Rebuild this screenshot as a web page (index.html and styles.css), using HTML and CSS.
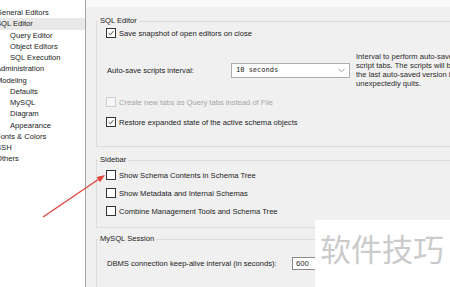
FILE: index.html
```html
<!DOCTYPE html>
<html lang="en">
<head>
	<meta charset="UTF-8">
	<title>Preferences</title>
	<link rel="stylesheet" href="styles.css">
</head>
<body>
<div class="sidebar">
	<div class="item">General Editors</div>
	<div class="item active">SQL Editor</div>
	<div class="item sub">Query Editor</div>
	<div class="item sub">Object Editors</div>
	<div class="item sub">SQL Execution</div>
	<div class="item">Administration</div>
	<div class="item">Modeling</div>
	<div class="item sub">Defaults</div>
	<div class="item sub">MySQL</div>
	<div class="item sub">Diagram</div>
	<div class="item sub">Appearance</div>
	<div class="item">Fonts &amp; Colors</div>
	<div class="item">SSH</div>
	<div class="item">Others</div>
</div>
<div class="main">
	<div class="topStrip"></div>
	<div class="panel">
		<fieldset class="group g1">
			<legend>SQL Editor</legend>
			<div class="row r1">
				<span class="chk"><svg viewBox="0 0 10 10"><path d="M2 5.2 L4.2 7.3 L8 2.6" /></svg></span>
				Save snapshot of open editors on close
			</div>
			<div class="interval">
				<span class="label">Auto-save scripts interval:</span>
				<span class="select">10 seconds<svg viewBox="0 0 8 5"><path d="M0.5 0.8 L4 4 L7.5 0.8" /></svg></span>
				<span class="desc">Interval to perform auto-save of all open<br>script tabs. The scripts will be restored from<br>the last auto-saved version if Workbench<br>unexpectedly quits.</span>
			</div>
			<div class="row r3 disabled">
				<span class="chk"></span>
				Create new tabs as Query tabs instead of File
			</div>
			<div class="row r4">
				<span class="chk"><svg viewBox="0 0 10 10"><path d="M2 5.2 L4.2 7.3 L8 2.6" /></svg></span>
				Restore expanded state of the active schema objects
			</div>
		</fieldset>

		<fieldset class="group g2">
			<legend>Sidebar</legend>
			<div class="row s1"><span class="chk"></span>Show Schema Contents in Schema Tree</div>
			<div class="row s2"><span class="chk"></span>Show Metadata and Internal Schemas</div>
			<div class="row s2"><span class="chk"></span>Combine Management Tools and Schema Tree</div>
		</fieldset>

		<fieldset class="group g3">
			<legend>MySQL Session</legend>
			<div class="keepAlive">
				<span class="label">DBMS connection keep-alive interval (in seconds):</span>
				<span class="input">600</span>
			</div>
		</fieldset>
	</div>
</div>

<!-- annotation arrow and watermark lie over the dialog -->
<svg class="arrow" viewBox="0 0 450 287">
	<line x1="43" y1="217" x2="99" y2="179" />
	<polygon points="105,175 100.1,182.2 96.6,177" />
</svg>
<div class="wm">软件技巧</div>
</body>
</html>
```

FILE: styles.css
```css
html, body {
	margin: 0;
	padding: 0;
}

body {
	width: 450px;
	height: 287px;
	overflow: hidden;
	display: flex;
	position: relative;
	font-family: "Liberation Sans", Arial, sans-serif;
	font-size: 7.6px;
	color: #1b1b1b;
	background: #fff;
}

.sidebar {
	width: 85px;
	flex: none;
	background: #fff;
	border-right: 1px solid #a6a6a6;
	padding-top: 7px;
	box-sizing: content-box;
	overflow: hidden;
}

.sidebar .item {
	height: 11.25px;
	line-height: 11.25px;
	text-indent: -4px;
	white-space: nowrap;
}

.sidebar .sub {
	text-indent: 10px;
}

.sidebar .active {
	background: #e8e8e8;
}

.main {
	flex: 1;
	display: flex;
	flex-direction: column;
	overflow: hidden;
}

.topStrip {
	height: 7px;
	background: #fafafa;
	flex: none;
}

.panel {
	flex: 1;
	background: #f0f0f0;
	padding-left: 10px;
	overflow: hidden;
}

.group {
	margin: 0;
	width: 420px;
	border: 1px solid #dcdcdc;
	padding: 0 0 10px 9px;
	box-sizing: border-box;
}

.group legend {
	line-height: 12px;
	padding: 0 2px;
	margin-left: -8px;
}

.g1 {
	margin-top: 8px;
	padding-bottom: 18px;
}

.g2 {
	margin-top: 7px;
}

.g3 {
	margin-top: 5px;
	padding-bottom: 20px;
}

.row {
	display: flex;
	align-items: center;
	height: 12px;
	gap: 3px;
	white-space: nowrap;
}

.r3, .r4 {
	margin-top: 8px;
}

.s1 {
	margin-top: 3px;
}

.s2 {
	margin-top: 6px;
}

.chk {
	width: 10px;
	height: 10px;
	box-sizing: border-box;
	border: 1px solid #333;
	background: #fff;
	flex: none;
	display: flex;
}

.chk svg {
	width: 8px;
	height: 8px;
	fill: none;
	stroke: #333;
	stroke-width: 1.1;
}

.disabled {
	color: #a6a6a6;
}

.disabled .chk {
	border-color: #cfcfcf;
	background: #f6f6f6;
}

.interval {
	display: flex;
	align-items: center;
	margin-top: 13px;
	white-space: nowrap;
}

.interval .label {
	width: 124px;
	padding-left: 1px;
}

.select {
	width: 119px;
	height: 15px;
	box-sizing: border-box;
	border: 1px solid #adadad;
	background: #fff;
	display: flex;
	align-items: center;
	justify-content: space-between;
	padding: 0 4px 0 4px;
	font-family: "DejaVu Sans Mono", monospace;
	font-size: 7px;
}

.select svg {
	width: 7px;
	height: 5px;
	fill: none;
	stroke: #888;
	stroke-width: 0.9;
}

.desc {
	margin-left: 6px;
	line-height: 9px;
	color: #2a2a2a;
}

.keepAlive {
	display: flex;
	align-items: center;
	margin-top: 12px;
	white-space: nowrap;
}

.keepAlive .label {
	width: 185px;
	padding-left: 1px;
}

.input {
	width: 40px;
	height: 13px;
	box-sizing: border-box;
	border: 1px solid #8a8a8a;
	background: #fff;
	padding-left: 3px;
	line-height: 11px;
}

.arrow {
	position: absolute;
	left: 0;
	top: 0;
	width: 450px;
	height: 287px;
	pointer-events: none;
}

.arrow line {
	stroke: #e2463d;
	stroke-width: 1.4;
}

.arrow polygon {
	fill: #e2463d;
}

.wm {
	position: absolute;
	left: 315px;
	top: 220px;
	right: 0;
	bottom: 0;
	background: #fff;
	color: #cbcbcb;
	font-family: "Noto Sans CJK SC", sans-serif;
	font-size: 31px;
	line-height: 56px;
	padding-left: 5px;
	white-space: nowrap;
}
```
